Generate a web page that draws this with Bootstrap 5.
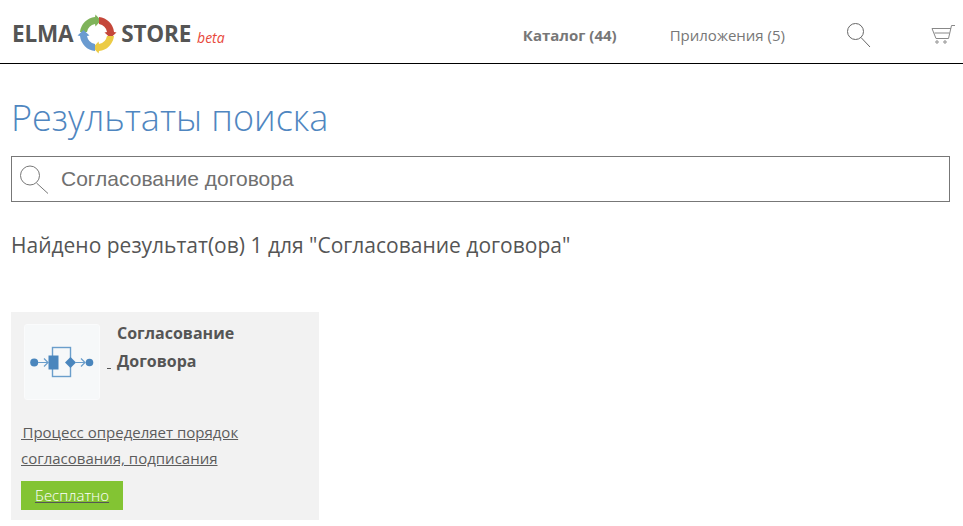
<!DOCTYPE html>
<html lang="ru">
<head>
<meta charset="utf-8">
<title>ELMA Store</title>
<link href="https://cdn.jsdelivr.net/npm/bootstrap@5.3.0/dist/css/bootstrap.min.css" rel="stylesheet">
<style>
html,body{height:526px;overflow:hidden}
body{font-family:"Open Sans",sans-serif;color:#555;background:#fff}
.top-bar{height:64px;border-bottom:1px solid #000;padding:5px 8px 0 12px}
.brand-word{font-size:22.500px;font-weight:700;color:#555;line-height:1;letter-spacing:-.2px}
.brand-ring{margin:0 4px 0 4px}
.brand-beta{font-size:14px;font-style:italic;color:#e8483c;margin-left:6px;margin-top:7px;line-height:1}
.top-link{font-size:15px;color:#777;text-decoration:none;margin-top:2px}
.top-link.is-current{font-weight:700}
.link-first{margin-right:53px}
.link-second{margin-right:62px}
.icon-search{margin-right:60px;margin-top:2px}
.icon-cart{margin-top:2px}
.page-body{padding:0 13px 0 11px}
.page-title{font-size:36px;font-weight:300;color:#4f86c0;line-height:46px;margin:31px 0 0 0}
.search-box{height:46px;border:1px solid #777;margin-top:15px;padding-left:8px;gap:12px}
.search-text{font-family:"Liberation Sans",sans-serif;font-size:21px;color:#707070;line-height:1;padding-bottom:1px}
.result-line{font-size:21px;color:#555;line-height:26px;margin:30px 0 0 0}
.result-card{width:308px;height:208px;background:#f2f2f2;margin-top:54px;padding:12px 10px 0}
.thumb-box{width:76px;height:76px;background:#f6f8f9;border-radius:3px;margin:0 0 0 3px;flex:none;border:1px solid #fafbfc}
.card-name{font-size:16px;font-weight:700;line-height:28px;color:#555;margin:-5px 0 0 6px}
.dash-mark{font-size:15px;line-height:28px;align-self:flex-start;margin:23px 0 0 7px;width:4px;height:28px;text-decoration:underline;white-space:pre}
.head-row{height:95px}
.card-desc{font-size:15px;line-height:26px;color:#5c5c5c;text-decoration:underline;margin:0;width:240px}
.free-tag{display:block;width:102px;height:29px;background:#83c433;color:#fff;font-size:15px;font-weight:300;line-height:29px;text-align:center;text-decoration:underline;margin-top:10px;text-decoration-color:#555}
</style>
</head>
<body>
<header class="top-bar d-flex align-items-center">
  <div class="d-flex align-items-center">
    <span class="brand-word">ELMA</span>
    <svg class="brand-ring" width="40" height="40" viewBox="-20 -20 40 40" aria-hidden="true">
      <path d="M-17 -2A17 17 0 0 1 -2 -17L-1.500 -19.500L4 -13.500L-1.500 -7.500L-2 -10A10 10 0 0 0 -10 -2Z" fill="#7fb35a"/>
      <path d="M-17 -2A17 17 0 0 1 -2 -17L-1.500 -19.500L4 -13.500L-1.500 -7.500L-2 -10A10 10 0 0 0 -10 -2Z" fill="#c5473a" transform="rotate(90)"/>
      <path d="M-17 -2A17 17 0 0 1 -2 -17L-1.500 -19.500L4 -13.500L-1.500 -7.500L-2 -10A10 10 0 0 0 -10 -2Z" fill="#eccb45" transform="rotate(180)"/>
      <path d="M-17 -2A17 17 0 0 1 -2 -17L-1.500 -19.500L4 -13.500L-1.500 -7.500L-2 -10A10 10 0 0 0 -10 -2Z" fill="#6a9bd0" transform="rotate(270)"/>
    </svg>
    <span class="brand-word">STORE</span>
    <span class="brand-beta">beta</span>
  </div>
  <nav class="d-flex align-items-center ms-auto">
    <a class="top-link is-current link-first" href="#">Каталог (44)</a>
    <a class="top-link link-second" href="#">Приложения (5)</a>
    <svg class="icon-search" width="24" height="25" viewBox="0 0 24 25" fill="none" stroke="#666" stroke-width="1" aria-hidden="true"><circle cx="8.500" cy="8.500" r="8"/><path d="M14 14.500L23 24"/></svg>
    <svg class="icon-cart" width="24" height="20" viewBox="0 0 24 20" fill="none" stroke="#888" stroke-width="1" aria-hidden="true"><path d="M24 .5H20.500L17.500 13.500H5L1 3.500H20"/><path d="M3.500 8H18.500"/><circle cx="6" cy="17" r="1.200"/><circle cx="14" cy="17" r="1.200"/></svg>
  </nav>
</header>
<main class="page-body">
  <h1 class="page-title">Результаты поиска</h1>
  <div class="search-box d-flex align-items-center">
    <svg width="29" height="29" viewBox="0 0 29 29" fill="none" stroke="#777" stroke-width="1" aria-hidden="true"><circle cx="10" cy="10.500" r="9.500"/><path d="M16.500 18L28 28.500"/></svg>
    <span class="search-text">Согласование договора</span>
  </div>
  <p class="result-line">Найдено результат(ов) 1 для "Согласование договора"</p>
  <article class="result-card">
    <div class="head-row d-flex">
      <div class="thumb-box d-flex align-items-center justify-content-center">
        <svg width="66" height="34" viewBox="0 0 66 34" fill="none" aria-hidden="true">
          <circle cx="5.200" cy="17.500" r="4" fill="#4a86bd"/>
          <path d="M9 17.500H19M15 13.500L19 17.500L15 21.500" stroke="#6a9ecb" stroke-width="1.200"/>
          <rect x="23.500" y="2.500" width="18" height="29" stroke="#6a9ecb" stroke-width="1.400"/>
          <rect x="19.500" y="10.500" width="10" height="14" fill="#4a86bd"/>
          <path d="M41.500 12L47 17.500L41.500 23L36 17.500Z" fill="#4a86bd"/>
          <path d="M46 17.500H56M52 13.500L56 17.500L52 21.500" stroke="#6a9ecb" stroke-width="1.200"/>
          <circle cx="60.500" cy="17.500" r="3.800" fill="#4a86bd"/>
        </svg>
      </div>
      <span class="dash-mark"> </span>
      <div class="card-name">Согласование<br>Договора</div>
    </div>
    <p class="card-desc">&#8202;Процесс определяет порядок согласования, подписания</p>
    <span class="free-tag">Бесплатно</span>
  </article>
</main>
</body>
</html>
